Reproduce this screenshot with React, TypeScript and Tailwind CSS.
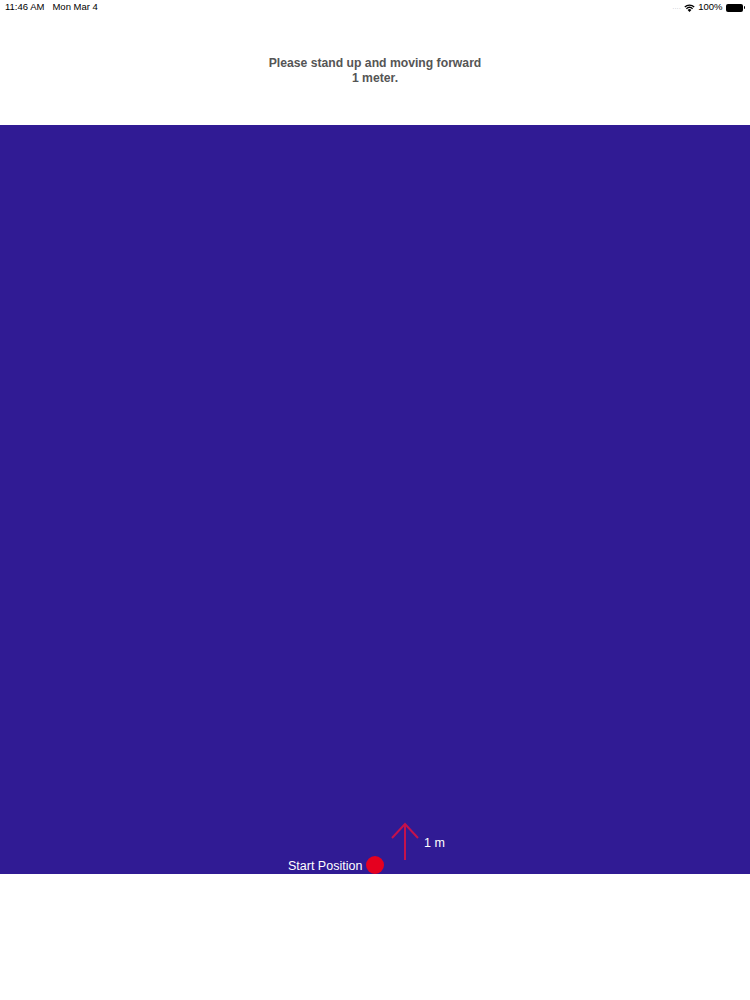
import React from "react";

export default function App() {
  return (
    <div className="w-[750px] h-[1000px] bg-white flex flex-col" style={{ fontFamily: '"Liberation Sans", Arial, sans-serif' }}>
      <div className="h-[125px] flex flex-col">
        <div className="h-[15px] flex items-center justify-between px-[5px] text-[9.5px] text-black">
          <div className="flex gap-[8px]">
            <span>11:46 AM</span>
            <span>Mon Mar 4</span>
          </div>
          <div className="flex items-center gap-[3px]">
            <span className="text-[6px] text-gray-400 tracking-[0.5px]">....</span>
            <svg width="11" height="8" viewBox="0 0 11 8">
              <path d="M5.5 8 L3.6 5.9 A2.8 2.8 0 0 1 7.4 5.9 Z" fill="#000" />
              <path d="M2.4 4.7 A4.6 4.6 0 0 1 8.6 4.7" stroke="#000" strokeWidth="1.3" fill="none" />
              <path d="M0.8 3 A6.8 6.8 0 0 1 10.2 3" stroke="#000" strokeWidth="1.3" fill="none" />
            </svg>
            <span>100%</span>
            <div className="flex items-center">
              <div className="w-[17px] h-[8px] rounded-[2px] bg-black" />
              <div className="w-[1.5px] h-[3px] bg-black ml-[1px] rounded-r-sm" />
            </div>
          </div>
        </div>
        <div className="flex justify-center mt-[41px]">
          <p className="whitespace-nowrap text-center text-[12.2px] font-semibold leading-[15px] text-[#555555]">
            Please stand up and moving forward
            <br />
            1 meter.
          </p>
        </div>
      </div>
      <div className="h-[749px] bg-[#301b94] relative">
        <svg className="absolute left-[390px] top-[697px]" width="30" height="40" viewBox="0 0 30 40">
          <path d="M15 2 L15 38" stroke="#c4124c" strokeWidth="2" fill="none" />
          <path d="M2 16 L15 2 L28 16" stroke="#c4124c" strokeWidth="2" fill="none" />
        </svg>
        <span className="absolute left-[424px] top-[709px] text-[12.5px] text-white">1 m</span>
        <span className="absolute left-[288px] top-[732px] text-[12.5px] text-white">Start Position</span>
        <div className="absolute left-[366px] top-[731px] w-[18px] h-[18px] rounded-full bg-[#e5001f]" />
      </div>
      <div className="flex-1 bg-white" />
    </div>
  );
}
